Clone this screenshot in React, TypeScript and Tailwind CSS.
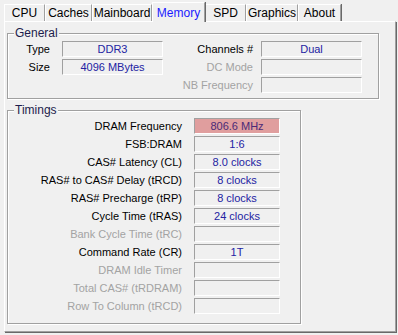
const tabs = [
  { name: "CPU", w: "w-[41px]" },
  { name: "Caches", w: "w-[47px]" },
  { name: "Mainboard", w: "w-[60px]" },
  { name: "Memory", w: "w-[53px]", active: true },
  { name: "SPD", w: "w-[41px]" },
  { name: "Graphics", w: "w-[52px]" },
  { name: "About", w: "w-[43px]" },
];

const timings = [
  { label: "DRAM Frequency", value: "806.6 MHz", hot: true },
  { label: "FSB:DRAM", value: "1:6" },
  { label: "CAS# Latency (CL)", value: "8.0 clocks" },
  { label: "RAS# to CAS# Delay (tRCD)", value: "8 clocks" },
  { label: "RAS# Precharge (tRP)", value: "8 clocks" },
  { label: "Cycle Time (tRAS)", value: "24 clocks" },
  { label: "Bank Cycle Time (tRC)", value: "", off: true },
  { label: "Command Rate (CR)", value: "1T" },
  { label: "DRAM Idle Timer", value: "", off: true },
  { label: "Total CAS# (tRDRAM)", value: "", off: true },
  { label: "Row To Column (tRCD)", value: "", off: true },
];

function Field({ value, w, hot }: { value?: string; w: string; hot?: boolean }) {
  return (
    <div
      className={`${w} h-[16px] shrink-0 flex items-center justify-center border border-t-[#a0a0a0] border-l-[#a0a0a0] border-b-white border-r-white leading-none ${
        hot ? "bg-[#e09e9e] text-[#4a2a78]" : "bg-[#f0f0f0] text-[#2323a3]"
      }`}
    >
      {value}
    </div>
  );
}

function Label({ text, w, off }: { text: string; w: string; off?: boolean }) {
  return (
    <div className={`${w} shrink-0 text-right leading-[16px] whitespace-nowrap ${off ? "text-[#a3a3a3]" : "text-black"}`}>
      {text}
    </div>
  );
}

export default function App() {
  return (
    <div className="w-[398px] h-[335px] bg-[#f0f0f0] font-['Liberation_Sans',Arial,sans-serif] text-[11px] text-black overflow-hidden">
      {/* Tabs */}
      <div className="flex items-end h-[21px] pl-[4px] pt-[2px]">
        {tabs.map((t) =>
          t.active ? (
            <div
              key={t.name}
              className={`${t.w} relative z-10 -mb-[1px] h-[20px] flex items-center justify-center bg-[#f0f0f0] border-l border-t border-white border-r border-r-[#a0a0a0] shadow-[1px_0_0_#696969] text-[#1a1aff] text-[12px]`}
            >
              {t.name}
            </div>
          ) : (
            <div
              key={t.name}
              className={`${t.w} h-[17px] flex items-center justify-center border-l border-t border-white border-r border-r-[#a0a0a0] shadow-[1px_0_0_#696969] text-[12px]`}
            >
              {t.name}
            </div>
          )
        )}
      </div>

      {/* Panel */}
      <div className="ml-[4px] w-[392px] h-[311px] border border-l-white border-t-white border-r-[#a0a0a0] border-b-[#a0a0a0] shadow-[1px_1px_0_#696969] px-[2px]">
        <fieldset className="mt-[5px] w-[372px] border border-[#a0a0a0] shadow-[inset_1px_1px_0_#fff,1px_1px_0_#fff] pb-[5px]">
          <legend className="ml-[6px] px-[1px] leading-[13px] bg-[#f0f0f0] text-[#1c1c4c] text-[12px]">General</legend>
          <div className="mt-[1px] flex flex-col gap-[2px]">
            <div className="flex">
              <Label text="Type" w="w-[42px]" />
              <div className="w-[12px]" />
              <Field value="DDR3" w="w-[101px]" />
              <Label text="Channels #" w="w-[90px]" />
              <div className="w-[8px]" />
              <Field value="Dual" w="w-[101px]" />
            </div>
            <div className="flex">
              <Label text="Size" w="w-[42px]" />
              <div className="w-[12px]" />
              <Field value="4096 MBytes" w="w-[101px]" />
              <Label text="DC Mode" w="w-[90px]" off />
              <div className="w-[8px]" />
              <Field w="w-[101px]" />
            </div>
            <div className="flex">
              <div className="w-[155px] shrink-0" />
              <Label text="NB Frequency" w="w-[90px]" off />
              <div className="w-[8px]" />
              <Field w="w-[101px]" />
            </div>
          </div>
        </fieldset>

        <fieldset className="mt-[5px] w-[294px] border border-[#a0a0a0] shadow-[inset_1px_1px_0_#fff,1px_1px_0_#fff] pb-[9px]">
          <legend className="ml-[6px] px-[1px] leading-[13px] bg-[#f0f0f0] text-[#1c1c4c] text-[12px]">Timings</legend>
          <div className="mt-[1px] flex flex-col gap-[2px]">
            {timings.map((r) => (
              <div key={r.label} className="flex">
                <Label text={r.label} w="w-[174px]" off={r.off} />
                <div className="w-[12px]" />
                <Field value={r.value} w="w-[86px]" hot={r.hot} />
              </div>
            ))}
          </div>
        </fieldset>
      </div>
    </div>
  );
}
